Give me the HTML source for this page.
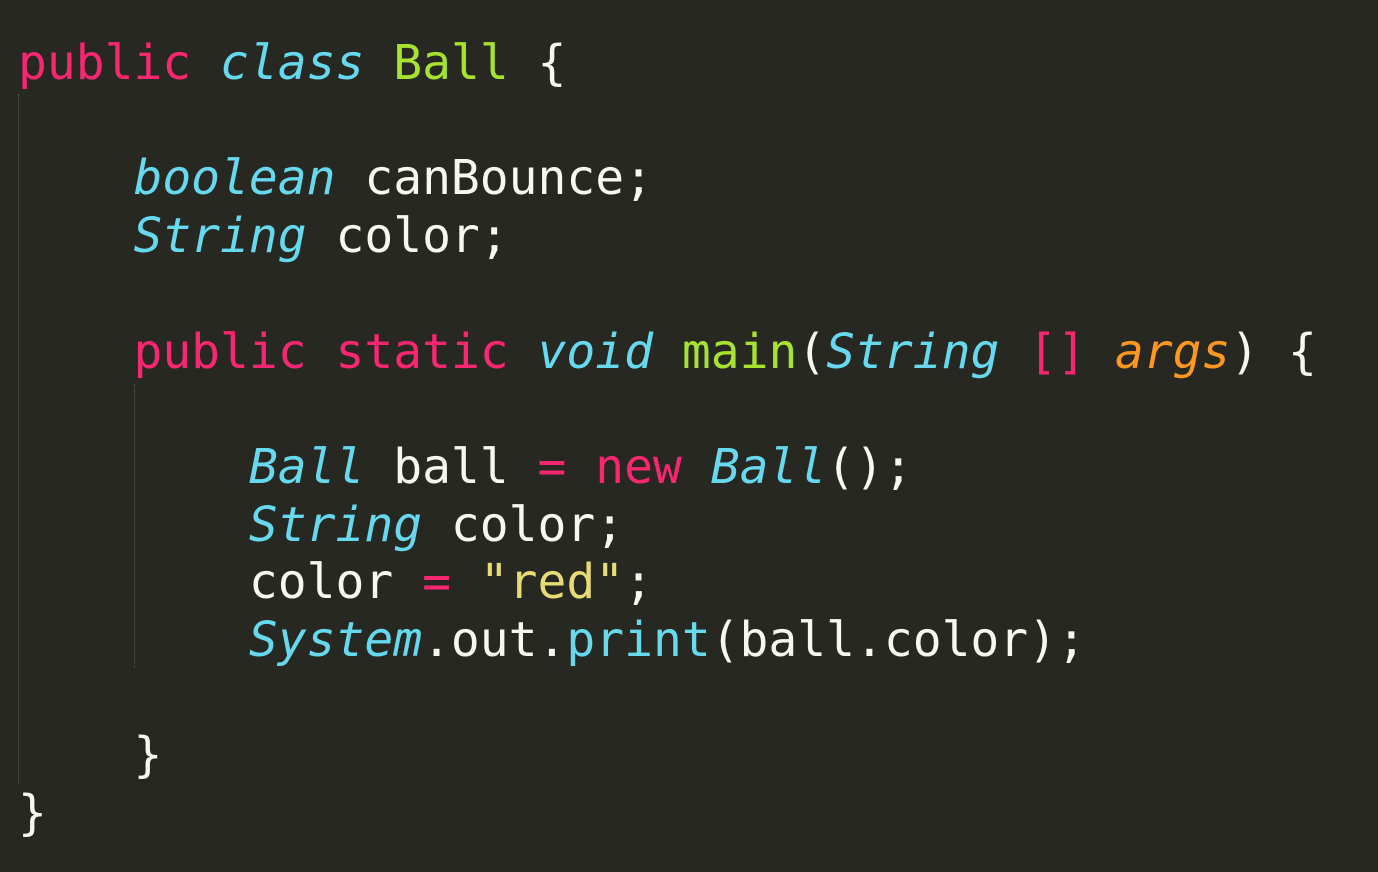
<!DOCTYPE html>
<html><head><style>
html,body{margin:0;padding:0;background:#282823;width:1378px;height:872px;overflow:hidden}
pre{position:absolute;left:18px;top:35px;margin:0;font-family:"DejaVu Sans Mono","Liberation Mono",monospace;font-size:47.95px;line-height:57.7px;color:#f8f8f2;letter-spacing:0}
.k{color:#f92672}.c{color:#66d9ef;font-style:italic}.g{color:#a6e22e}.o{color:#fd971f;font-style:italic}.y{color:#e6db74}.f{color:#66d9ef}
.guide{position:absolute;width:0;border-left:1px dotted #5a5a52}
</style></head><body>
<div class="guide" style="left:18px;top:94px;height:690px"></div>
<div class="guide" style="left:134px;top:384px;height:284px"></div>
<pre><span class="k">public</span> <span class="c">class</span> <span class="g">Ball</span> {

    <span class="c">boolean</span> canBounce;
    <span class="c">String</span> color;

    <span class="k">public</span> <span class="k">static</span> <span class="c">void</span> <span class="g">main</span>(<span class="c">String</span> <span class="k">[]</span> <span class="o">args</span>) {

        <span class="c">Ball</span> ball <span class="k">=</span> <span class="k">new</span> <span class="c">Ball</span>();
        <span class="c">String</span> color;
        color <span class="k">=</span> <span class="y">"red"</span>;
        <span class="c">System</span>.out.<span class="f">print</span>(ball.color);

    }
}</pre>
</body></html>
